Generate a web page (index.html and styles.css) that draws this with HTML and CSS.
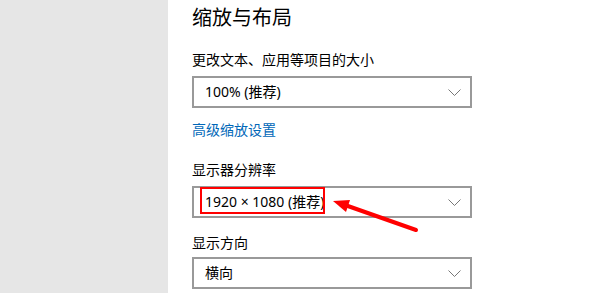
FILE: index.html
```html
<!DOCTYPE html>
<html lang="zh-CN">
<head>
<meta charset="utf-8">
<link rel="stylesheet" href="styles.css">
</head>
<body>
<div class="page">
  <aside class="sidebar"></aside>
  <main class="main">
    <h1 class="title">缩放与布局</h1>
    <div class="label label-first">更改文本、应用等项目的大小</div>
    <div class="select select-first">
      <span class="select-text">100% (推荐)</span>
      <svg class="chev" width="13" height="7" viewBox="0 0 13 7"><polyline points="0.5,0.5 6.5,6.5 12.5,0.5" fill="none" stroke="#777" stroke-width="1"/></svg>
    </div>
    <a class="link">高级缩放设置</a>
    <div class="label label-res">显示器分辨率</div>
    <div class="select select-res">
      <span class="select-text">1920 × 1080 (推荐)</span>
      <svg class="chev" width="13" height="7" viewBox="0 0 13 7"><polyline points="0.5,0.5 6.5,6.5 12.5,0.5" fill="none" stroke="#777" stroke-width="1"/></svg>
      <div class="highlight"></div>
    </div>
    <div class="label label-orient">显示方向</div>
    <div class="select select-orient">
      <span class="select-text">横向</span>
      <svg class="chev" width="13" height="7" viewBox="0 0 13 7"><polyline points="0.5,0.5 6.5,6.5 12.5,0.5" fill="none" stroke="#777" stroke-width="1"/></svg>
    </div>
  </main>
  <svg class="arrow" width="600" height="293" viewBox="0 0 600 293">
    <line x1="416" y1="230" x2="345" y2="205" stroke="#f00" stroke-width="4" stroke-linecap="round"/>
    <polygon points="333,201 350,200 346,212" fill="#f00"/>
  </svg>
</div>
</body>
</html>
```
FILE: styles.css
```css
html, body {
  margin: 0;
  padding: 0;
  background: #fff;
}
body {
  font-family: "Noto Sans", "Noto Sans CJK SC", sans-serif;
  color: #000;
}
.page {
  position: relative;
  display: flex;
  width: 600px;
  height: 293px;
  overflow: hidden;
}
.sidebar {
  width: 168px;
  flex: 0 0 168px;
  background: #e6e6e6;
}
.main {
  flex: 1;
  padding-left: 24px;
  display: flex;
  flex-direction: column;
  align-items: flex-start;
}
.title {
  font-family: "Noto Sans CJK SC", sans-serif;
  font-size: 20px;
  font-weight: 400;
  line-height: 28px;
  margin: 3px 0 0 0;
}
.label {
  font-family: "Noto Sans CJK SC", sans-serif;
  font-size: 14px;
  line-height: 20px;
}
.label-first { margin-top: 18px; }
.label-res { margin-top: 20px; }
.label-orient { margin-top: 14px; }
.select {
  position: relative;
  box-sizing: border-box;
  width: 280px;
  height: 32px;
  border: 2px solid #999;
  display: flex;
  align-items: center;
  justify-content: space-between;
  padding: 0 9px 0 11px;
  margin-top: 7px;
}
.select-orient { margin-top: 5px; }
.select-text {
  font-family: "Noto Sans", "Noto Sans CJK SC", sans-serif;
  font-size: 14px;
  line-height: 20px;
}
.chev { display: block; }
.link {
  font-family: "Noto Sans CJK SC", sans-serif;
  font-size: 14px;
  line-height: 20px;
  color: #0067b8;
  margin-top: 11px;
}
.highlight {
  position: absolute;
  left: 6px;
  top: -1px;
  width: 125px;
  height: 27px;
  box-sizing: border-box;
  border: 2px solid #f00;
}
.arrow {
  position: absolute;
  left: 0;
  top: 0;
  pointer-events: none;
}
```
